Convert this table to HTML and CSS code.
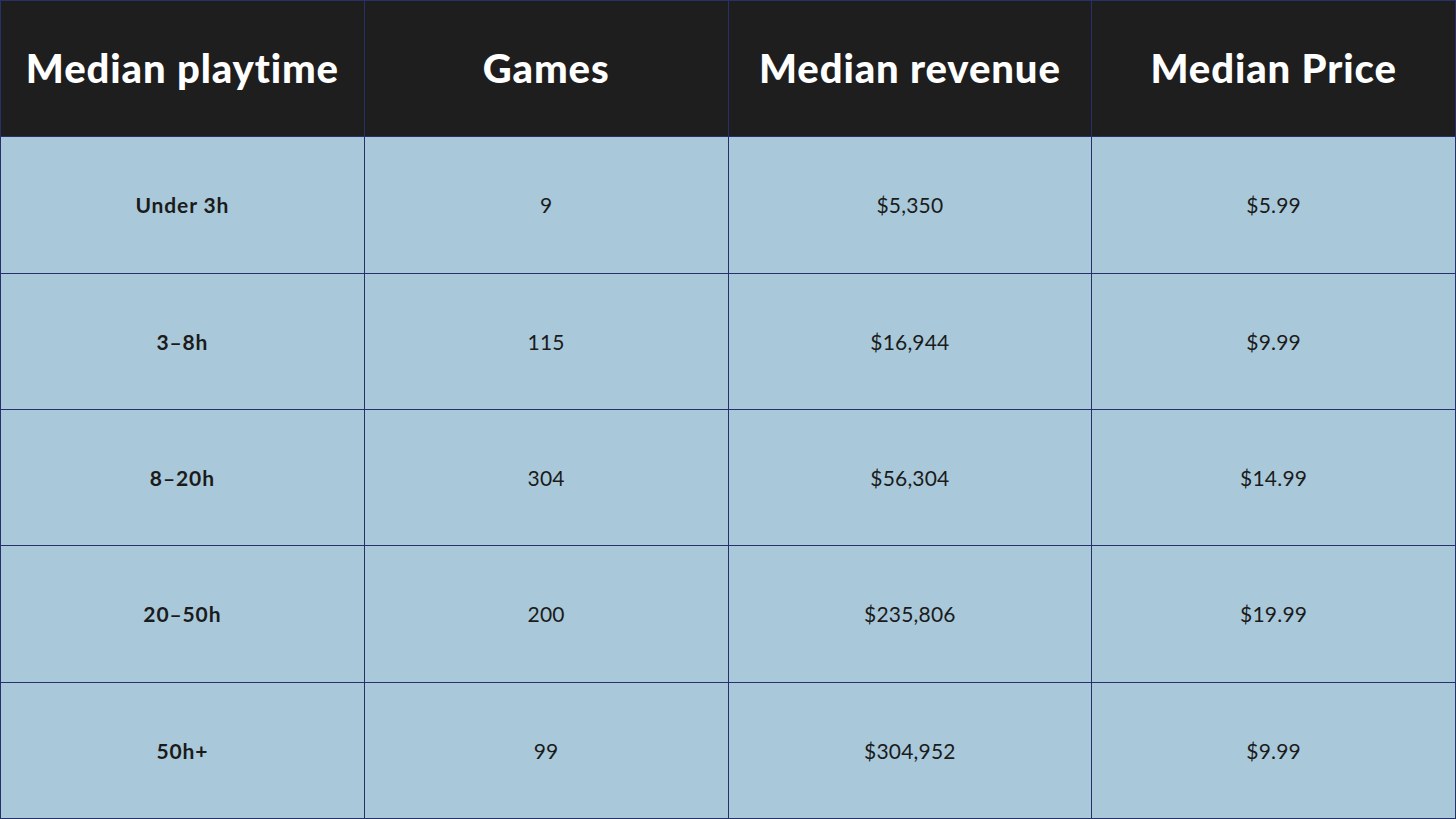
FILE: index.html
```html
<!DOCTYPE html>
<html>
<head>
<meta charset="utf-8">
<link rel="stylesheet" href="styles.css">
</head>
<body>
<div class="grid">
  <div class="head">Median playtime</div>
  <div class="head">Games</div>
  <div class="head">Median revenue</div>
  <div class="head">Median Price</div>

  <div class="cell label">Under 3h</div>
  <div class="cell">9</div>
  <div class="cell">$5,350</div>
  <div class="cell">$5.99</div>

  <div class="cell label">3–8h</div>
  <div class="cell">115</div>
  <div class="cell">$16,944</div>
  <div class="cell">$9.99</div>

  <div class="cell label">8–20h</div>
  <div class="cell">304</div>
  <div class="cell">$56,304</div>
  <div class="cell">$14.99</div>

  <div class="cell label">20–50h</div>
  <div class="cell">200</div>
  <div class="cell">$235,806</div>
  <div class="cell">$19.99</div>

  <div class="cell label">50h+</div>
  <div class="cell">99</div>
  <div class="cell">$304,952</div>
  <div class="cell">$9.99</div>
</div>
</body>
</html>
```
FILE: styles.css
```css
html, body {
  margin: 0;
  padding: 0;
  background: #a9c9da;
}
.grid {
  box-sizing: border-box;
  width: 1456px;
  height: 819px;
  display: grid;
  grid-template-columns: repeat(4, 1fr);
  grid-template-rows: repeat(6, 1fr);
  gap: 1px;
  padding: 1px;
  background: #28306b;
  font-family: Lato, "Noto Sans", sans-serif;
}
.head, .cell {
  display: flex;
  align-items: center;
  justify-content: center;
  text-align: center;
}
.head {
  background: #1e1e1e;
  color: #ffffff;
  font-size: 40px;
  font-weight: 900;
  letter-spacing: 0.9px;
  padding-bottom: 2px;
}
.cell {
  background: #a9c9da;
  color: #1b1b1b;
  font-size: 21px;
  font-weight: 400;
  letter-spacing: 0.2px;
}
.cell.label {
  font-weight: 700;
  letter-spacing: 0.9px;
}
```
